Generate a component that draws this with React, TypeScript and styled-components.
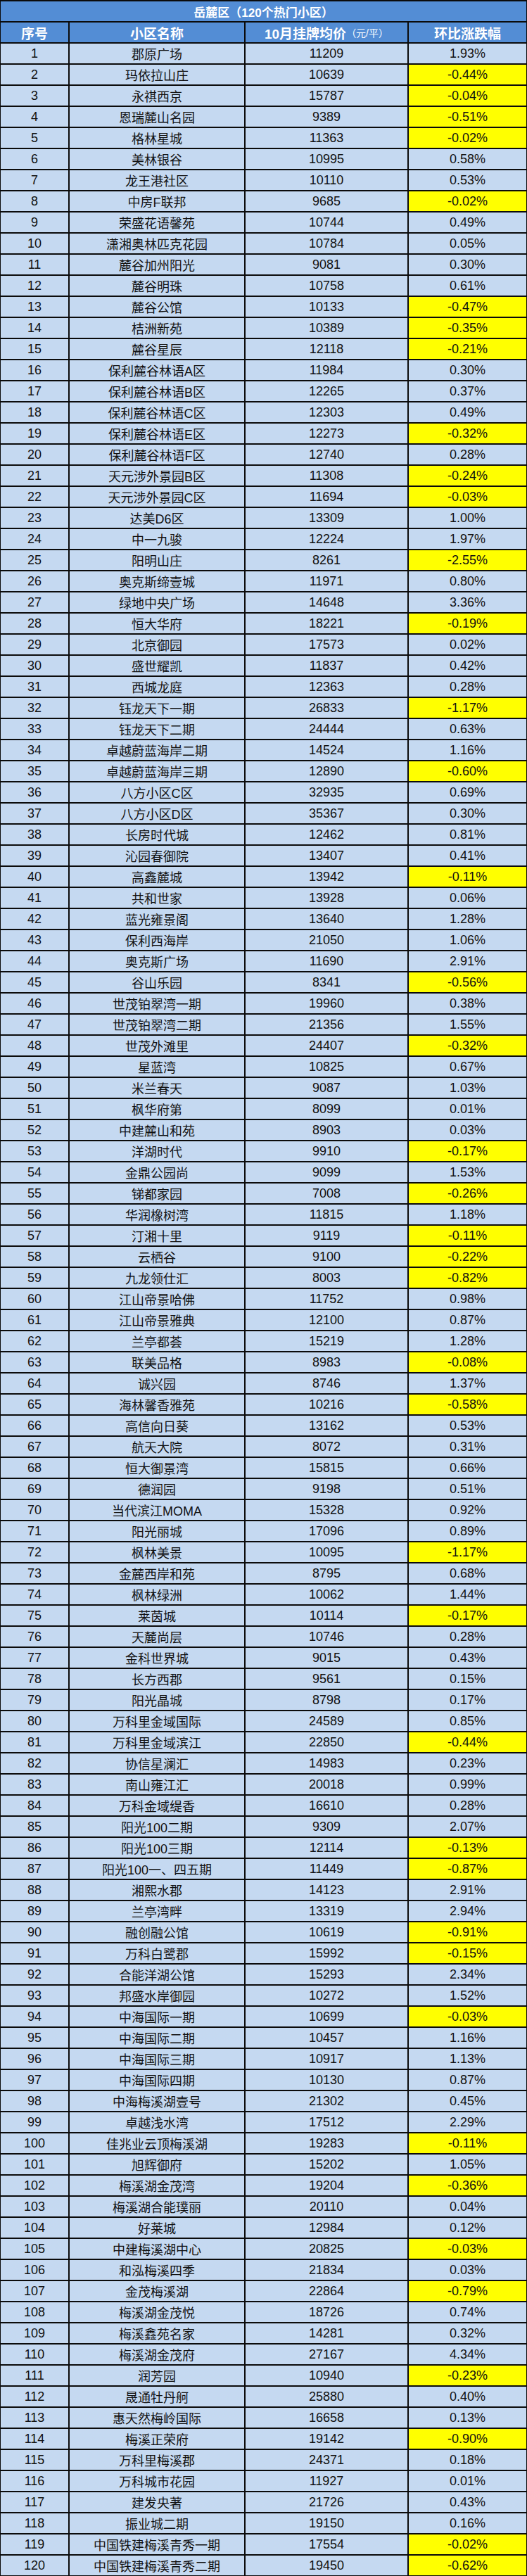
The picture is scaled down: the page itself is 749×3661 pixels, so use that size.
import React from 'react'
import styled, { createGlobalStyle } from 'styled-components'

const GlobalStyle = createGlobalStyle`
  html, body {
    margin: 0;
    padding: 0;
    background: #ffffff;
  }
`

const RAW = `郡原广场|11209|1.93
玛依拉山庄|10639|-0.44
永祺西京|15787|-0.04
恩瑞麓山名园|9389|-0.51
格林星城|11363|-0.02
美林银谷|10995|0.58
龙王港社区|10110|0.53
中房F联邦|9685|-0.02
荣盛花语馨苑|10744|0.49
潇湘奥林匹克花园|10784|0.05
麓谷加州阳光|9081|0.30
麓谷明珠|10758|0.61
麓谷公馆|10133|-0.47
桔洲新苑|10389|-0.35
麓谷星辰|12118|-0.21
保利麓谷林语A区|11984|0.30
保利麓谷林语B区|12265|0.37
保利麓谷林语C区|12303|0.49
保利麓谷林语E区|12273|-0.32
保利麓谷林语F区|12740|0.28
天元涉外景园B区|11308|-0.24
天元涉外景园C区|11694|-0.03
达美D6区|13309|1.00
中一九骏|12224|1.97
阳明山庄|8261|-2.55
奥克斯缔壹城|11971|0.80
绿地中央广场|14648|3.36
恒大华府|18221|-0.19
北京御园|17573|0.02
盛世耀凯|11837|0.42
西城龙庭|12363|0.28
钰龙天下一期|26833|-1.17
钰龙天下二期|24444|0.63
卓越蔚蓝海岸二期|14524|1.16
卓越蔚蓝海岸三期|12890|-0.60
八方小区C区|32935|0.69
八方小区D区|35367|0.30
长房时代城|12462|0.81
沁园春御院|13407|0.41
高鑫麓城|13942|-0.11
共和世家|13928|0.06
蓝光雍景阁|13640|1.28
保利西海岸|21050|1.06
奥克斯广场|11690|2.91
谷山乐园|8341|-0.56
世茂铂翠湾一期|19960|0.38
世茂铂翠湾二期|21356|1.55
世茂外滩里|24407|-0.32
星蓝湾|10825|0.67
米兰春天|9087|1.03
枫华府第|8099|0.01
中建麓山和苑|8903|0.03
洋湖时代|9910|-0.17
金鼎公园尚|9099|1.53
锑都家园|7008|-0.26
华润橡树湾|11815|1.18
汀湘十里|9119|-0.11
云栖谷|9100|-0.22
九龙领仕汇|8003|-0.82
江山帝景哈佛|11752|0.98
江山帝景雅典|12100|0.87
兰亭都荟|15219|1.28
联美品格|8983|-0.08
诚兴园|8746|1.37
海林馨香雅苑|10216|-0.58
高信向日葵|13162|0.53
航天大院|8072|0.31
恒大御景湾|15815|0.66
德润园|9198|0.51
当代滨江MOMA|15328|0.92
阳光丽城|17096|0.89
枫林美景|10095|-1.17
金麓西岸和苑|8795|0.68
枫林绿洲|10062|1.44
莱茵城|10114|-0.17
天麓尚层|10746|0.28
金科世界城|9015|0.43
长方西郡|9561|0.15
阳光晶城|8798|0.17
万科里金域国际|24589|0.85
万科里金域滨江|22850|-0.44
协信星澜汇|14983|0.23
南山雍江汇|20018|0.99
万科金域缇香|16610|0.28
阳光100二期|9309|2.07
阳光100三期|12114|-0.13
阳光100一、四五期|11449|-0.87
湘熙水郡|14123|2.91
兰亭湾畔|13319|2.94
融创融公馆|10619|-0.91
万科白鹭郡|15992|-0.15
合能洋湖公馆|15293|2.34
邦盛水岸御园|10272|1.52
中海国际一期|10699|-0.03
中海国际二期|10457|1.16
中海国际三期|10917|1.13
中海国际四期|10130|0.87
中海梅溪湖壹号|21302|0.45
卓越浅水湾|17512|2.29
佳兆业云顶梅溪湖|19283|-0.11
旭辉御府|15202|1.05
梅溪湖金茂湾|19204|-0.36
梅溪湖合能璞丽|20110|0.04
好莱城|12984|0.12
中建梅溪湖中心|20825|-0.03
和泓梅溪四季|21834|0.03
金茂梅溪湖|22864|-0.79
梅溪湖金茂悦|18726|0.74
梅溪鑫苑名家|14281|0.32
梅溪湖金茂府|27167|4.34
润芳园|10940|-0.23
晟通牡丹舸|25880|0.40
惠天然梅岭国际|16658|0.13
梅溪正荣府|19142|-0.90
万科里梅溪郡|24371|0.18
万科城市花园|11927|0.01
建发央著|21726|0.43
振业城二期|19150|0.16
中国铁建梅溪青秀一期|17554|-0.02
中国铁建梅溪青秀二期|19450|-0.62`

type Row = { name: string; price: string; change: string }

const rows: Row[] = RAW.split('\n').map((line) => {
  const [name, price, change] = line.split('|')
  return { name, price, change }
})

const Sheet = styled.div`
  width: 749px;
  box-sizing: border-box;
  display: grid;
  grid-template-columns: 96px 248px 230px 167px;
  column-gap: 2px;
  row-gap: 2px;
  background: #0b0b0b;
  border-top: 2px solid #0b0b0b;
  border-bottom: 1px solid #0b0b0b;
  border-left: 1px solid #0b0b0b;
  border-right: 3px solid #0b0b0b;
  font-family: "Liberation Sans", "Noto Sans CJK SC", sans-serif;
`

const Title = styled.div`
  grid-column: 1 / -1;
  height: 28px;
  display: flex;
  align-items: center;
  justify-content: center;
  background: #538dd5;
  color: #ffffff;
  font-size: 17px;
  font-weight: bold;
`

const HeadCell = styled.div`
  height: 28px;
  display: flex;
  align-items: center;
  justify-content: center;
  background: #538dd5;
  color: #ffffff;
  font-size: 19px;
  font-weight: bold;
  white-space: nowrap;
`

const Unit = styled.span`
  font-size: 14px;
  font-weight: normal;
`

const Cell = styled.div<{ $down?: boolean }>`
  height: 28px;
  display: flex;
  align-items: center;
  justify-content: center;
  background: ${(p) => (p.$down ? '#ffff00' : '#c5d9f1')};
  color: #111111;
  font-size: 18px;
  white-space: nowrap;
`

export default function App() {
  return (
    <>
      <GlobalStyle />
      <Sheet>
        <Title>岳麓区（120个热门小区）</Title>
        <HeadCell>序号</HeadCell>
        <HeadCell>小区名称</HeadCell>
        <HeadCell>
          10月挂牌均价<Unit>（元/平）</Unit>
        </HeadCell>
        <HeadCell>环比涨跌幅</HeadCell>
        {rows.map((r, i) => {
          const down = r.change.startsWith('-')
          return (
            <React.Fragment key={i}>
              <Cell>{i + 1}</Cell>
              <Cell>{r.name}</Cell>
              <Cell>{r.price}</Cell>
              <Cell $down={down}>{r.change}%</Cell>
            </React.Fragment>
          )
        })}
      </Sheet>
    </>
  )
}
